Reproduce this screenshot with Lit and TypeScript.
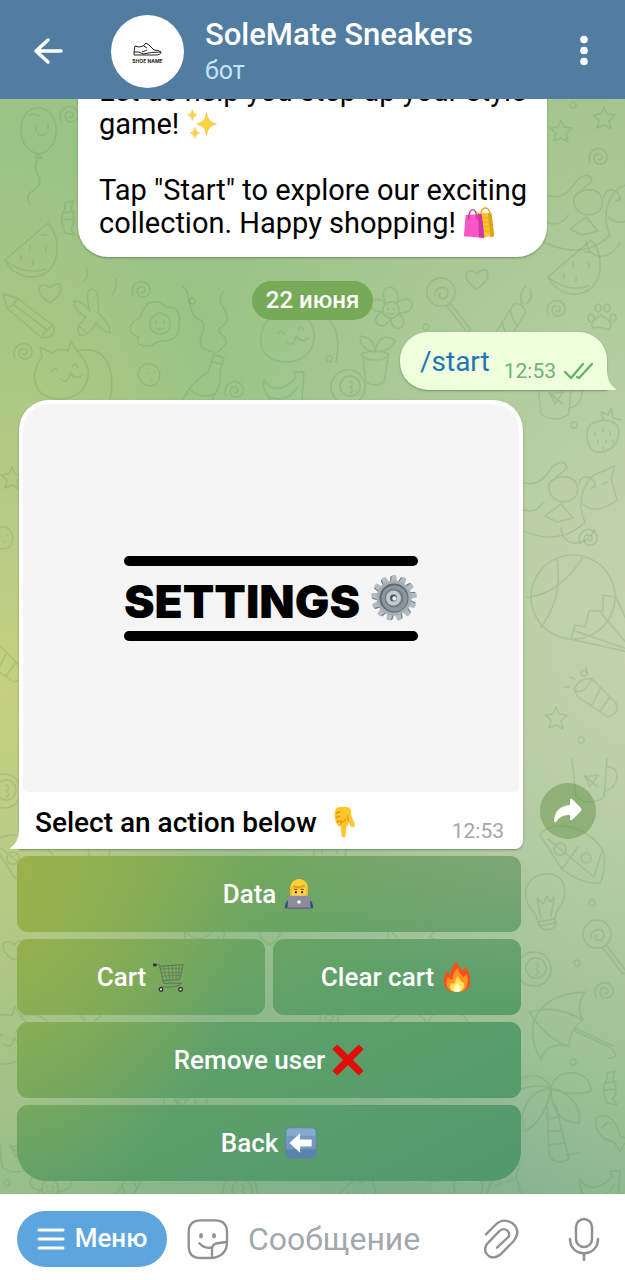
import { LitElement, html, css, svg } from "lit";
import { customElement } from "lit/decorators.js";

const SPARKLES = svg`<g fill="#fcd53f" stroke="#eeb534" stroke-width=".6">
  <path d="M22 5 Q23 16 33 18 Q23 20 22 31 Q21 20 11 18 Q21 16 22 5Z"/>
  <path d="M6 2 Q6.500 7 11 8 Q6.500 9 6 14 Q5.500 9 1 8 Q5.500 7 6 2Z"/>
  <path d="M9 22 Q9.500 27 14 28 Q9.500 29 9 34 Q8.500 29 4 28 Q8.500 27 9 22Z"/></g>`;

const BAGS = svg`<path d="M20 10 Q20 1 25 1 Q30 1 31 10" fill="none" stroke="#e3a312" stroke-width="1.500"/>
  <path d="M15 6 L32 7 L35 33 L20 34Z" fill="#f7c52c"/><path d="M28 7 H32 L35 33 L31 34Z" fill="#dba117"/>
  <path d="M16 12 H32 M17 17 H33 M18 22 H33 M19 27 H34" stroke="#e5ac1d" stroke-width="1"/>
  <path d="M3 9 L21 8 L24 35 L1 33Z" fill="#f857c5"/><path d="M17 8 H21 L24 35 L18 34Z" fill="#cf36a1"/>
  <path d="M6 14 Q7 3 11 3 Q15 3 16 14" fill="none" stroke="#c33295" stroke-width="1.500"/>`;

const POINT = svg`<g transform="translate(3 0) scale(.84 1)"><path d="M7 3 Q8 1 12 1 H22 Q26 1 27 5 L28 12 L32 19 Q33 23 30 24 Q27 24 25 20 L24 18 Q24 22 21 23 L20 33 Q19.500 35.500 17.500 35.500 Q15 35.500 14.500 33 L13.500 23 Q9 23 8 19 Q6 18 6 14 Q4 10 7 3Z" fill="#fdc62b"/>
  <path d="M8 19 Q10 16 14 17 M7 14 Q9 11 13 12 M7 9 Q9 6 13 7 M14 22 V17 Q19 19 20 14 M24 17 Q22 14 23 10" fill="none" stroke="#df9412" stroke-width="1.400"/></g>`;

const CODER = svg`<path d="M2 34 Q2 24 10 23 H26 Q34 24 34 34Z" fill="#2c4c86"/>
  <path d="M8 20 Q6 2 18 1 Q30 2 28 20 Q25 25 11 25Z" fill="#f2b824"/>
  <path d="M10 12 Q18 14 26 11 V20 Q24 24 18 24 Q12 24 10 20Z" fill="#ffd34d"/>
  <path d="M8 13 Q8 2 18 1 Q29 2 28 13 Q25 11 24 8 Q18 12 12 9 Q10 10 8 13Z" fill="#ffcf36"/>
  <path d="M12 9 Q18 12 24 8" fill="none" stroke="#cf8d12" stroke-width="1.200"/>
  <path d="M12.500 13 H16 M20 13 H23.500" stroke="#7a4a12" stroke-width="1.200"/>
  <circle cx="14.500" cy="16" r="1.300" fill="#4a2c12"/><circle cx="21.500" cy="16" r="1.300" fill="#4a2c12"/>
  <path d="M6 20 H30 L31 34 H5Z" fill="#8b8d9c"/><path d="M5 33 H31 V35 H5Z" fill="#6c6e80"/>
  <circle cx="18" cy="27" r="2" fill="#fff"/>`;

const CART = svg`<g fill="none" stroke="#5c6b5a" stroke-width="1">
  <path d="M1 4 H7 L12 25 H32 M7 6 L34 4 L30 21 L11 22 M32 25 Q28 31 8 29"/>
  <path d="M8 9 L33 8 M9 13 H32 M10 17 L31 16 M12 6 L15 22 M17 6 L19 22 M22 5 L22 21 M26 5 V21 M30 5 L28 21" stroke-width=".6"/></g>
  <path d="M0 3 H4 V6 H0Z" fill="#333"/>
  <circle cx="9" cy="32" r="2" fill="#ddd" stroke="#333" stroke-width="1.500"/><circle cx="31" cy="32" r="2" fill="#ddd" stroke="#333" stroke-width="1.500"/>`;

const FIRE = svg`<path d="M18 0 Q19 6 25 11 Q27 9 27 6 Q33 13 33 22 Q33 35 18 35 Q3 35 3 22 Q3 15 8 10 Q8 14 11 16 Q11 6 18 0Z" fill="#f4511e"/>
  <path d="M19 8 Q20 14 25 18 Q28 16 28 14 Q31 19 30 24 Q29 35 18 35 Q7 35 6 25 Q6 20 8 18 Q10 21 13 21 Q13 13 19 8Z" fill="#ff9425"/>
  <path d="M19 17 Q20 21 24 24 Q27 25 26 29 Q24 35 18 35 Q11 35 10 29 Q10 26 12 25 Q15 26 16 24 Q16 20 19 17Z" fill="#ffe352"/>
  <path d="M18 25 Q23 29 22 32 Q21 35 18 35 Q14 35 14 31 Q15 28 18 25Z" fill="#fffbd0"/>`;

const CROSS = svg`<path d="M6 1 L18 13 L30 1 L35 6 L23 18 L35 30 L30 35 L18 23 L6 35 L1 30 L13 18 L1 6Z" fill="#e60b0b" stroke="#e60b0b" stroke-width="1" stroke-linejoin="round"/>`;

const LEFT = svg`<rect x=".5" y=".5" width="35" height="35" rx="5" fill="#5d82ad"/>
  <rect x="1.500" y="1.500" width="33" height="17" rx="4" fill="#86a9cf"/><rect x="1.500" y="10" width="33" height="15" fill="#7197c2"/>
  <path d="M5 18 L17 7 V14 H30 V22 H17 V29Z" fill="#fff"/>`;

const emoji = (art: unknown, label: string) =>
  html`<svg class="emoji" viewBox="0 0 36 36" role="img" aria-label=${label}>${art}</svg>`;

const teeth = Array.from({ length: 13 }, (_, i) => (i * 360) / 13);
const GEAR = html`<svg class="gear" viewBox="0 0 48 48" role="img" aria-label="gear">
  <g fill="#6f777e">${teeth.map((a) => svg`<path transform="rotate(${a} 24 24) translate(-1 .8)" d="M20.500 10 L21.500 1.500 Q24 .5 26.500 1.500 L27.500 10Z"/>`)}</g>
  <g fill="#b4bcc3">${teeth.map((a) => svg`<path transform="rotate(${a} 24 24)" d="M20.500 10 L21.800 1.500 Q24 .5 26.200 1.500 L27.500 10Z"/>`)}</g>
  <circle cx="24" cy="24" r="17.500" fill="#a6aeb5"/>
  <circle cx="24" cy="24" r="14.500" fill="#5f686f"/><circle cx="24.500" cy="24.500" r="13" fill="#8d969d"/>
  <circle cx="24" cy="24" r="9.500" fill="#737c84"/><circle cx="23.500" cy="24" r="7.500" fill="#c3cad0"/>
  <circle cx="23.500" cy="24" r="3.500" fill="#4d555c"/><circle cx="24.500" cy="24.500" r="2.200" fill="#e9ecee"/></svg>`;

const SHAPES: Record<string, string> = {
  balloon: "M0 -26 C24 -26 24 16 1 20 C-24 16 -22 -26 0 -26Z M-3 24 L0 20 L4 24Z M0 24 C-10 40 12 44 -4 56 Q-14 62 -8 70 M-2 -8 V-3 M10 -10 V-5 M0 0 Q5 3 9 -1 M-9 -19 Q-3 -21 2 -18",
  melon: "M-27 12 L16 -25 C32 -8 28 30 -2 29 Q-20 27 -27 12Z M-27 12 Q-8 28 14 21 M-2 -3 v5 M-12 8 q3 3 0 5 M1 12 v5 M14 -2 v5 M10 -13 h5",
  pencil: "M-24 -22 L-10 -18 L27 10 Q29 22 15 22 L-20 -8Z M-20 -8 Q-12 -10 -10 -18 M-14 -12 L20 14 M27 10 Q18 12 15 22",
  heart: "M0 10 C-20 -2 -8 -14 0 -5 C8 -16 20 -4 0 10Z",
  spiral: "M-9 6 C-14 -8 4 -14 8 -2 C10 9 -5 10 -5 1 C-4 -5 4 -4 3 1 Q1 4 -1 2",
  egg: "M-6 -22 C10 -27 6 -16 16 -18 C30 -14 22 2 24 4 C20 22 4 12 -2 20 C-16 24 -20 16 -16 12 C-32 8 -24 -4 -16 -6 C-12 -14 -10 -20 -6 -22Z M5 -12 C20 -10 18 10 4 9 C-8 8 -8 -10 5 -12Z M1 -4 v3 M9 -4 v3 M1 3 q4 3 8 0",
  cat: "M-22 -18 L-24 -28 L-12 -22 Q-5 -28 4 -24 L7 -34 L14 -22 C32 -8 26 22 -2 24 C-34 24 -34 -4 -22 -18Z M14 -24 C44 -32 52 0 46 24 M-12 -4 q3 -5 6 0 M8 -8 q3 -5 6 0 M-4 4 Q4 10 6 -2 Q12 6 18 0",
  bottle: "M14 -38 L24 -34 L20 -20 Q22 -8 14 4 L4 26 L-26 18 Q-16 6 -10 -4 Q0 -16 8 -20Z M12 -30 L22 -28 M-10 -2 Q4 8 14 2 M-18 8 Q-4 18 8 14 M18 -40 C38 -56 14 -56 20 -64 C40 -76 10 -90 24 -100 M14 -40 C-16 -44 14 -66 0 -72 C-16 -80 -6 -100 -18 -106",
  flower: "M-5 -6 C-16 -28 12 -28 6 -7 C24 -20 28 4 8 3 C22 18 0 26 0 8 C-10 26 -24 8 -8 2 C-28 2 -20 -20 -5 -6Z M0 -8 a8 8 0 1 0 .1 0 M-3 -2 v2 M3 -2 v2 M-3 3 q3 3 6 0",
  pot: "M-14 -10 Q0 -16 14 -10 Q12 -4 0 -4 Q-12 -4 -14 -10Z M-12 -6 L-9 18 Q0 24 9 18 L13 -6 M0 -12 C-14 -14 -16 -24 -14 -28 Q0 -26 0 -12 C2 -26 10 -30 20 -24 Q16 -12 0 -12",
  lolly: "M0 -16 a14 14 0 1 0 .1 0 M5 11 L26 38 L30 36 L9 9 M-6 2 C-8 -8 8 -10 7 0 C4 8 -4 4 -1 -1",
  candle: "M-14 30 L14 -14 Q22 -16 26 -6 L0 36 M-14 30 Q-6 38 0 36 M10 -8 Q14 6 18 8 M2 4 Q6 18 9 20 M-6 17 Q-2 28 2 32 M22 -14 q-4 -10 4 -18 M26 -14 q8 -6 4 -14",
  paw: "M-8 10 C-12 4 -4 0 0 -3 C4 0 14 4 8 12 Q0 8 -8 10Z M-10 -4 a3 4 0 1 0 .1 0 M-3 -14 a3 4 0 1 0 .1 0 M6 -14 a3 4 0 1 0 .1 0 M12 -4 a3 4 0 1 0 .1 0",
  star: "M0 -11 L3 -4 L11 -3 L5 3 L7 11 L0 7 L-7 10 L-5 2 L-11 -3 L-3 -4Z",
  berry: "M-12 -8 C0 -14 16 -14 16 2 Q12 22 -8 20 C-18 14 -18 -2 -12 -8Z M0 -12 L-2 -20 L5 -17 L8 -24 L10 -14 L18 -12 M-8 0 v3 M0 -4 v3 M7 0 v3 M-5 8 v3 M3 8 v3 M10 8 v3 M0 15 v2",
  mug: "M-18 -26 L-14 12 Q0 22 14 12 L17 -26 M16 -18 C32 -20 30 4 14 6 M-6 -10 L0 2 L8 -10 L-6 -8 L8 2Z",
  sitter: "M-60 30 Q-10 60 20 30 C10 10 20 -16 36 -20 L50 -26 L46 -14 L52 8 Q30 24 18 12 M-52 -14 C-30 0 -20 -14 -12 -26 Q0 -34 2 -24 L-14 -10 C-4 -20 16 -16 12 2 C4 16 -18 10 -16 -6 Q-16 -10 -12 -12 M14 -8 C16 -22 36 -12 28 -4 M-4 36 C-2 56 20 56 30 38 M26 -4 l5 -2 M38 -8 l5 -2 M-46 16 Q-30 24 -22 10 M-20 24 L-4 12 L8 26 L-8 30Z",
  balloonBig: "M0 -44 a42 42 0 1 0 .1 0 M-16 -41 Q-10 0 -32 28 M10 -42 Q-14 -4 -46 -2 M-2 40 L2 26 L12 28 L16 12 L30 12 L30 -4 L42 -2 M-12 38 L60 54 M2 32 L60 52 M28 14 L60 52 M42 -4 L62 40",
  torch: "M-26 -6 Q-20 -18 -8 -16 L16 8 Q20 18 8 22 L-22 2Z M-26 -6 Q-18 2 -8 -16 M0 -6 L-8 10 M10 2 L0 16 M-14 -28 l1 6 M-30 -18 l5 2 M-36 -8 l5 0",
  pizza: "M-32 -26 C-20 -44 20 -34 32 -8 Q34 10 28 22 Q10 24 -10 8Z M-24 -22 L22 16 M-10 8 L6 -14 M22 16 L30 -10 M-12 -18 a6 6 0 1 0 .1 0 M14 -8 a5 5 0 1 0 .1 0",
  bulb: "M-7 16 Q-8 10 -12 5 C-28 -12 -16 -34 4 -32 C24 -30 22 -6 14 2 Q10 8 10 13Z M-7 16 Q-4 26 6 23 Q13 21 10 13 M-6 20 L10 17 M-4 12 L-8 -8 L-2 -2 L2 -10 L5 -4 L9 -9 L6 10",
  donut: "M0 -16 a17 17 0 1 0 .1 0 M2 -10 a10 10 0 1 0 .1 0 M2 -5 q5 3 0 6 q5 4 0 6",
  umbrella: "M-24 34 C-46 -6 -22 -32 20 -34 Q10 -20 18 -6 M-36 -14 Q-10 -22 18 -6 M-36 -14 Q-18 14 4 20 M-24 34 Q-20 16 4 20 Q4 4 18 -6 M8 4 L46 22 Q56 32 44 32 M10 2 L48 20",
  palm: "M-2 -24 C-10 -46 -40 -38 -46 -18 C-34 -26 -10 -30 -2 -24 C-24 -24 -36 0 -28 18 Q-8 8 -2 -24 C10 -24 30 -10 26 10 C4 10 -2 -8 -2 -24 C0 -46 38 -46 38 -22 Q22 -16 -2 -24 M-6 -8 L-4 40 Q0 54 16 46 L2 -10 M-6 6 L6 4 M-6 18 L9 18 M-5 32 L12 30 M14 42 l12 -2",
  candy: "M-4 -14 L4 -16 L2 -8 Q8 4 2 12 L6 18 L-4 16 L-6 10 Q-10 0 -4 -8Z M-5 -4 L5 -6 M-6 3 L5 2",
  fish: "M-14 -14 C-2 -22 8 -8 10 4 L20 8 L14 12 L10 20 L4 10 C-10 8 -16 -4 -14 -14Z M-8 -4 Q-2 -12 2 -8",
  banana: "M-20 -6 Q-8 12 12 -8 L10 -14 L20 -14 L18 14 M-20 -6 C-24 18 6 18 14 0 M-18 8 Q-8 24 10 14",
  dot: "M0 -3 a3 3 0 1 0 .1 0",
  cookie: "M-6 -10 C4 -14 12 -6 9 4 C8 12 -6 14 -10 4 C-14 -2 -10 -8 -6 -10Z M-3 -2 h1 M4 -3 h1 M1 4 h1",
  plane: "M-18 -14 Q-8 -14 -2 -4 Q-8 -24 0 -26 Q8 -26 6 -2 Q18 8 18 18 Q10 16 4 8 Q-4 22 -12 20 Q-18 14 -6 2 Q-18 -4 -18 -14Z M-12 12 l6 5 M-8 -34 Q-2 -40 -6 -48 M20 -20 Q26 -28 24 -36",
};

const DOODLES: [string, number, number][] = [
  ["balloon", 38, 134], ["spiral", 70, 115], ["melon", 32, 248], ["candy", 69, 217], ["pencil", 27, 316], ["heart", 50, 293],
  ["plane", 92, 315], ["spiral", 24, 352], ["egg", 155, 325], ["cat", 64, 375], ["cookie", 150, 375], ["bottle", 200, 392],
  ["spiral", 142, 290], ["dot", 192, 301], ["flower", 391, 310], ["pot", 375, 364], ["lolly", 441, 294], ["heart", 477, 279],
  ["candle", 500, 318], ["spiral", 557, 309], ["paw", 601, 318], ["dot", 426, 327], ["dot", 329, 359], ["banana", 284, 386],
  ["donut", 348, 386], ["spiral", 235, 390], ["cat", 290, 338], ["star", 561, 131], ["star", 604, 118], ["spiral", 599, 157],
  ["sitter", 590, 205], ["dot", 573, 105], ["melon", 575, 265], ["mug", 555, 402], ["berry", 603, 432], ["dot", 574, 425],
  ["sitter", 565, 492], ["spiral", 589, 538], ["balloonBig", 573, 599], ["torch", 600, 695], ["star", 556, 718], ["dot", 584, 673],
  ["dot", 581, 740], ["mug", 590, 785], ["pizza", 572, 861], ["bulb", 545, 906], ["dot", 592, 903], ["lolly", 597, 936],
  ["donut", 534, 968], ["dot", 577, 963], ["spiral", 605, 991], ["umbrella", 565, 1026], ["palm", 553, 1113], ["dot", 573, 1062],
  ["candy", 611, 1087], ["fish", 610, 1132], ["banana", 600, 1185], ["star", 12, 478], ["cookie", 3, 538], ["torch", 6, 660],
  ["donut", 4, 790], ["heart", 14, 950], ["cat", 8, 1040], ["mug", 16, 1155], ["dot", 7, 1183], ["flower", 50, 1188],
  ["heart", 270, 935], ["banana", 205, 936], ["star", 90, 1018], ["spiral", 330, 1018], ["palm", 430, 1050], ["donut", 240, 1190],
  ["melon", 350, 1195], ["candle", 120, 1180], ["sitter", 470, 1190], ["umbrella", 420, 935], ["mug", 180, 1108], ["cookie", 100, 852],
  ["berry", 330, 850], ["pizza", 25, 870],
];

interface Key { label: string; art: unknown; alt: string }
const KEYBOARD: Key[][] = [
  [{ label: "Data", art: CODER, alt: "man technologist" }],
  [{ label: "Cart", art: CART, alt: "cart" }, { label: "Clear cart", art: FIRE, alt: "fire" }],
  [{ label: "Remove user", art: CROSS, alt: "cross" }],
  [{ label: "Back", art: LEFT, alt: "left arrow" }],
];

@customElement("app-root")
export class AppRoot extends LitElement {
  static styles = css`
    :host { display: flex; flex-direction: column; height: 100vh; font-family: Roboto, "Noto Sans", sans-serif; font-size: 28px; line-height: 33px; color: #000; background: #fff; }
    * { box-sizing: border-box; }
    button { font: inherit; color: inherit; border: 0; padding: 0; background: none; display: flex; align-items: center; justify-content: center; cursor: pointer; }
    svg { display: block; flex: none; }
    .header { display: flex; align-items: center; height: 99px; padding: 3px 24px 0 31px; background: #517da2; color: #fff; flex: none; position: relative; z-index: 1; }
    .avatar { width: 73px; height: 73px; margin: 0 21px 0 46px; border-radius: 50%; background: #fff; flex: none; }
    .peer { flex: 1; min-width: 0; display: flex; flex-direction: column; gap: 3px; }
    .title { margin: 0; font-size: 31px; line-height: 36px; font-weight: 500; }
    .status { font-size: 25px; line-height: 30px; color: #c6e2fb; }
    .chat { flex: 1; min-height: 0; overflow: hidden; position: relative; display: flex; flex-direction: column; justify-content: flex-end; padding: 0 18px 13px;
      background: radial-gradient(ellipse 42% 50% at 0% 54%, #c5cf82 0%, #c5cf8200 100%), radial-gradient(ellipse 80% 62% at 104% 48%, #c6d3b0 0%, #c6d3b000 100%), radial-gradient(ellipse 110% 50% at 70% 104%, #78ad8b 0%, #78ad8b00 100%), linear-gradient(#9cc286, #98c386 30%, #a5c58a); }
    .chat > * { flex: none; }
    .wallpaper { position: absolute; inset: 0; width: 100%; height: 100%; fill: none; stroke: #4f8352; stroke-opacity: .19; stroke-width: 1.500; stroke-linecap: round; stroke-linejoin: round; }
    .bubble { position: relative; background: #fff; box-shadow: 0 1px 2px #3a5a3a80; }
    .welcome { align-self: center; width: 469px; max-width: 90%; padding: 0 20px 17px 21px; border-radius: 0 0 30px 30px; }
    .line { margin: 0; white-space: nowrap; }
    .gap { margin-top: 33px; }
    .welcome .line { font-size: 29px; }
    .emoji { display: inline-block; width: 32px; height: 32px; vertical-align: -6px; }
    .date { position: relative; align-self: center; margin: 24px 0 12px; padding: 3px 14px; border-radius: 20px; background: #76aa57; color: #fff; font-size: 24px; font-weight: 500; }
    .sent { align-self: flex-end; display: flex; align-items: flex-end; gap: 14px; height: 58px; padding: 0 12px 0 20px; border-radius: 28px 28px 0 28px; background: #effedd; }
    .sent a { color: #1f75b5; text-decoration: none; align-self: center; }
    .stamp { display: flex; align-items: center; gap: 7px; font-size: 21px; line-height: 24px; color: #6fb471; margin-bottom: 7px; }
    .tail-out { position: absolute; left: 100%; bottom: 0; }
    .tail-in { position: absolute; right: 100%; bottom: 0; }
    .row { display: flex; align-items: flex-end; gap: 17px; margin: 10px 11px 7px 1px; }
    .card { flex: 1; min-width: 0; border-radius: 30px 30px 8px 0; padding: 4px 4px 0; }
    .poster { height: 388px; border-radius: 26px 26px 5px 5px; background: #f5f5f6; display: flex; flex-direction: column; align-items: center; justify-content: center; }
    .plate { display: flex; align-items: center; gap: 10px; height: 85px; position: relative; font-family: Inter, sans-serif; font-weight: 900; font-size: 46px; line-height: 48px; }
    .plate span { padding-top: 5px; }
    .plate::before, .plate::after { content: ""; position: absolute; left: 0; right: 0; height: 10px; border-radius: 5px; background: #000; }
    .plate::before { top: 0; }
    .plate::after { bottom: 0; }
    .gear { width: 48px; height: 48px; }
    .caption { display: flex; justify-content: space-between; align-items: flex-end; height: 57px; padding: 0 15px 10px 12px; }
    .caption .line { font-weight: 500; }
    .caption .emoji { margin-left: 4px; }
    .caption .stamp { color: #a3a8ac; margin: 0 0 -4px; }
    .share { width: 56px; height: 56px; margin-bottom: 10px; border-radius: 50%; background: #8fb178; flex: none; }
    .keyboard { position: relative; display: grid; gap: 7px; margin: 0 86px 0 -1px; }
    .keys { display: grid; grid-auto-flow: column; grid-auto-columns: 1fr; gap: 8px; }
    .key { height: 76px; gap: 7px; border-radius: 11px; color: #fff; font-size: 26px; font-weight: 500;
      background: radial-gradient(ellipse 250px 380px at 0px 850px, #9eb34a 0%, #9eb34a00 100%) fixed, radial-gradient(ellipse 300px 200px at 560px 810px, #86a97b 0%, #86a97b00 100%) fixed, linear-gradient(155deg, #78aa5c 60%, #5c9f6b 75%, #52996b 90%) fixed; }
    .keys:last-child .key { border-radius: 11px 11px 30px 30px; }
    .composer { display: flex; align-items: center; flex: none; height: 86px; padding: 3px 24px 0 17px; background: #fff; color: #8f9499; }
    .menu { width: 150px; height: 56px; gap: 10px; margin-right: 19px; border-radius: 28px; background: #5da5df; color: #fff; font-weight: 500; font-size: 26px; flex: none; }
    .field { flex: 1; min-width: 0; margin: 0 16px 0 18px; padding: 0; border: 0; outline: 0; background: none; font: inherit; font-size: 32px; line-height: 36px; color: #000; }
    .field::placeholder { color: #a3a8ac; opacity: 1; }
    .tools { display: flex; gap: 46px; }
  `;

  render() {
    return html`
      <header class="header">
        <button aria-label="Назад"><svg width="34" height="32" viewBox="0 0 34 32" fill="none" stroke="#fff" stroke-width="3.500" stroke-linecap="round" stroke-linejoin="round"><path d="M30 16 H5 M17 5 L5 16 L17 27"/></svg></button>
        <div class="avatar"><svg width="73" height="73" viewBox="0 0 73 73" fill="none" stroke="#222" stroke-width="1" stroke-linejoin="round">
          <path d="M24 31 Q23 36 23 40 H44 Q50 40 50 37 Q48 35 43 35 L38 30 L35 28 Q33 32 28 32Z M23 37 Q28 36 32 39 Q40 37 50 37 M33 31 L36 33 M36 35 L31 37"/>
          <text x="36.500" y="48" text-anchor="middle" font-size="5" font-weight="700" fill="#222" stroke="none" font-family="Inter, sans-serif">SHOE NAME</text></svg></div>
        <div class="peer"><h1 class="title">SoleMate Sneakers</h1><span class="status">бот</span></div>
        <button aria-label="Ещё"><svg width="34" height="34" viewBox="0 0 34 34" fill="#fff"><circle cx="17" cy="5.500" r="3.800"/><circle cx="17" cy="16.500" r="3.800"/><circle cx="17" cy="27.500" r="3.800"/></svg></button>
      </header>
      <main class="chat">
        <svg class="wallpaper" viewBox="0 99 625 1095" preserveAspectRatio="xMidYMid slice" aria-hidden="true">
          ${DOODLES.map(([name, x, y]) => svg`<path transform="translate(${x} ${y})" d=${SHAPES[name]}/>`)}
        </svg>
        <section class="bubble welcome">
          <p class="line">Let us help you step up your style</p>
          <p class="line">game! ${emoji(SPARKLES, "sparkles")}</p>
          <p class="line gap">Tap "Start" to explore our exciting</p>
          <p class="line">collection. Happy shopping! ${emoji(BAGS, "shopping bags")}</p>
        </section>
        <time class="date">22 июня</time>
        <section class="bubble sent">
          <a href="#start">/start</a>
          <span class="stamp">12:53 <svg width="32" height="18" viewBox="0 0 32 18" fill="none" stroke="#5fb463" stroke-width="2.200" stroke-linecap="round" stroke-linejoin="round"><path d="M2 10 L8 16 L20 2 M14 15 L16 16 L29 2"/></svg></span>
          <svg class="tail-out" width="10" height="22" viewBox="0 0 10 22"><path d="M0 0 C0 12 3 17 9 21 Q9 22 8 22 H0Z" fill="#effedd"/></svg>
        </section>
        <div class="row">
          <section class="bubble card">
            <div class="poster"><div class="plate"><span>SETTINGS</span>${GEAR}</div></div>
            <div class="caption"><p class="line">Select an action below ${emoji(POINT, "pointing down")}</p><span class="stamp">12:53</span></div>
            <svg class="tail-in" width="10" height="22" viewBox="0 0 10 22"><path d="M10 0 C10 12 7 17 1 21 Q1 22 2 22 H10Z" fill="#fff"/></svg>
          </section>
          <button class="share" aria-label="Переслать"><svg width="30" height="28" viewBox="0 0 30 28"><path d="M17 3 Q17 1 19 2 L28 11 Q29 12.500 28 14 L19 23 Q17 24 17 22 V18 Q8 17 3 25 Q1 26 1 24 Q2 9 17 8Z" fill="#fff"/></svg></button>
        </div>
        <nav class="keyboard">
          ${KEYBOARD.map((row) => html`<div class="keys">${row.map((k) => html`<button class="key"><span>${k.label}</span>${emoji(k.art, k.alt)}</button>`)}</div>`)}
        </nav>
      </main>
      <footer class="composer">
        <button class="menu"><svg width="28" height="24" viewBox="0 0 28 24" stroke="#fff" stroke-width="3" stroke-linecap="round"><path d="M2 3 H26 M2 12 H26 M2 21 H26"/></svg>Меню</button>
        <button aria-label="Стикеры"><svg width="44" height="44" viewBox="560 78 132 132" fill="none" stroke="#8f9194" stroke-width="7" stroke-linecap="round" stroke-linejoin="round"><path d="M683 152 V124 Q683 88 647 88 H604 Q568 88 568 124 V164 Q568 201 604 201 H638 Q683 195 683 152Z M638 200 V176 Q638 157 658 156 L682 153 M600 157 Q616 175 637 169"/><g fill="#8f9194" stroke="none"><ellipse cx="605" cy="134" rx="6" ry="8"/><ellipse cx="644" cy="134" rx="6" ry="8"/></g></svg></button>
        <input class="field" type="text" placeholder="Сообщение" aria-label="Сообщение">
        <div class="tools">
          <button aria-label="Прикрепить"><svg width="39" height="44" viewBox="64 78 117 132" fill="none" stroke="#8f9194" stroke-width="7" stroke-linecap="round" stroke-linejoin="round"><path d="M76 130 L104 102 Q122 84 143 91 Q166 98 170 120 Q171 136 159 150 L122 188 Q104 205 86 196 Q66 182 78 160 L115 121 Q128 109 140 119 Q151 130 141 140 L109 170"/></svg></button>
          <button aria-label="Голосовое сообщение"><svg width="34" height="44" viewBox="0 0 34 44" fill="none" stroke="#8f9194" stroke-width="2.500" stroke-linecap="round"><rect x="9" y="2" width="16" height="28" rx="8"/><path d="M3 22 C3 41 31 41 31 22 M17 37 V43"/></svg></button>
        </div>
      </footer>`;
  }
}
